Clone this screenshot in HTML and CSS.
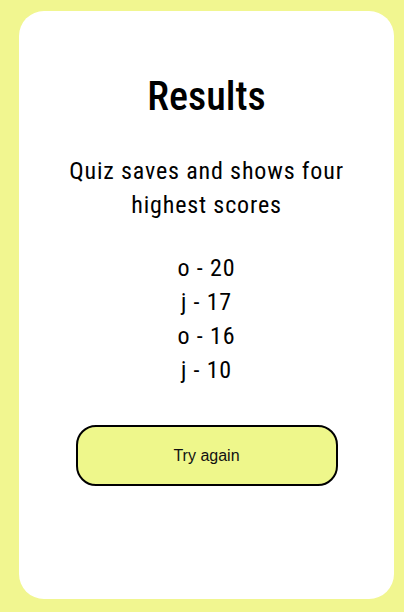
FILE: index.html
```html
<!DOCTYPE html>
<html>
<head>
<meta charset="utf-8">
<link rel="stylesheet" href="styles.css">
</head>
<body>
<main class="card">
  <h1 class="title">Results</h1>
  <p class="info">Quiz saves and shows four highest scores</p>
  <ul class="scores">
    <li>o - 20</li>
    <li>j - 17</li>
    <li>o - 16</li>
    <li>j - 10</li>
  </ul>
  <button class="again">Try again</button>
</main>
</body>
</html>
```
FILE: styles.css
```css
html, body {
  margin: 0;
  padding: 0;
}
body {
  background: #f1f690;
  padding: 11px 10px 13px 19px;
  height: 612px;
  box-sizing: border-box;
  display: flex;
  font-family: Roboto, sans-serif;
  font-stretch: condensed;
}
.card {
  flex: 1;
  background: #fff;
  border-radius: 25px;
  display: flex;
  flex-direction: column;
  align-items: center;
  padding: 62px 40px 0;
  color: #000;
}
.title {
  margin: 0;
  font-size: 40px;
  font-weight: 500;
  line-height: 48px;
}
.info {
  margin: 33px 0 0;
  font-size: 24px;
  line-height: 34px;
  text-align: center;
  letter-spacing: 0.85px;
}
.scores {
  list-style: none;
  margin: 29px 0 0;
  padding: 0;
  font-size: 24px;
  line-height: 34px;
  text-align: center;
  letter-spacing: 0.85px;
}
.again {
  margin-top: 38px;
  width: 262px;
  height: 61px;
  border: 2px solid #000;
  border-radius: 20px;
  background: #eef78b;
  font-family: "Liberation Sans", Arial, sans-serif;
  font-stretch: normal;
  font-size: 16px;
  color: #111;
}
```
